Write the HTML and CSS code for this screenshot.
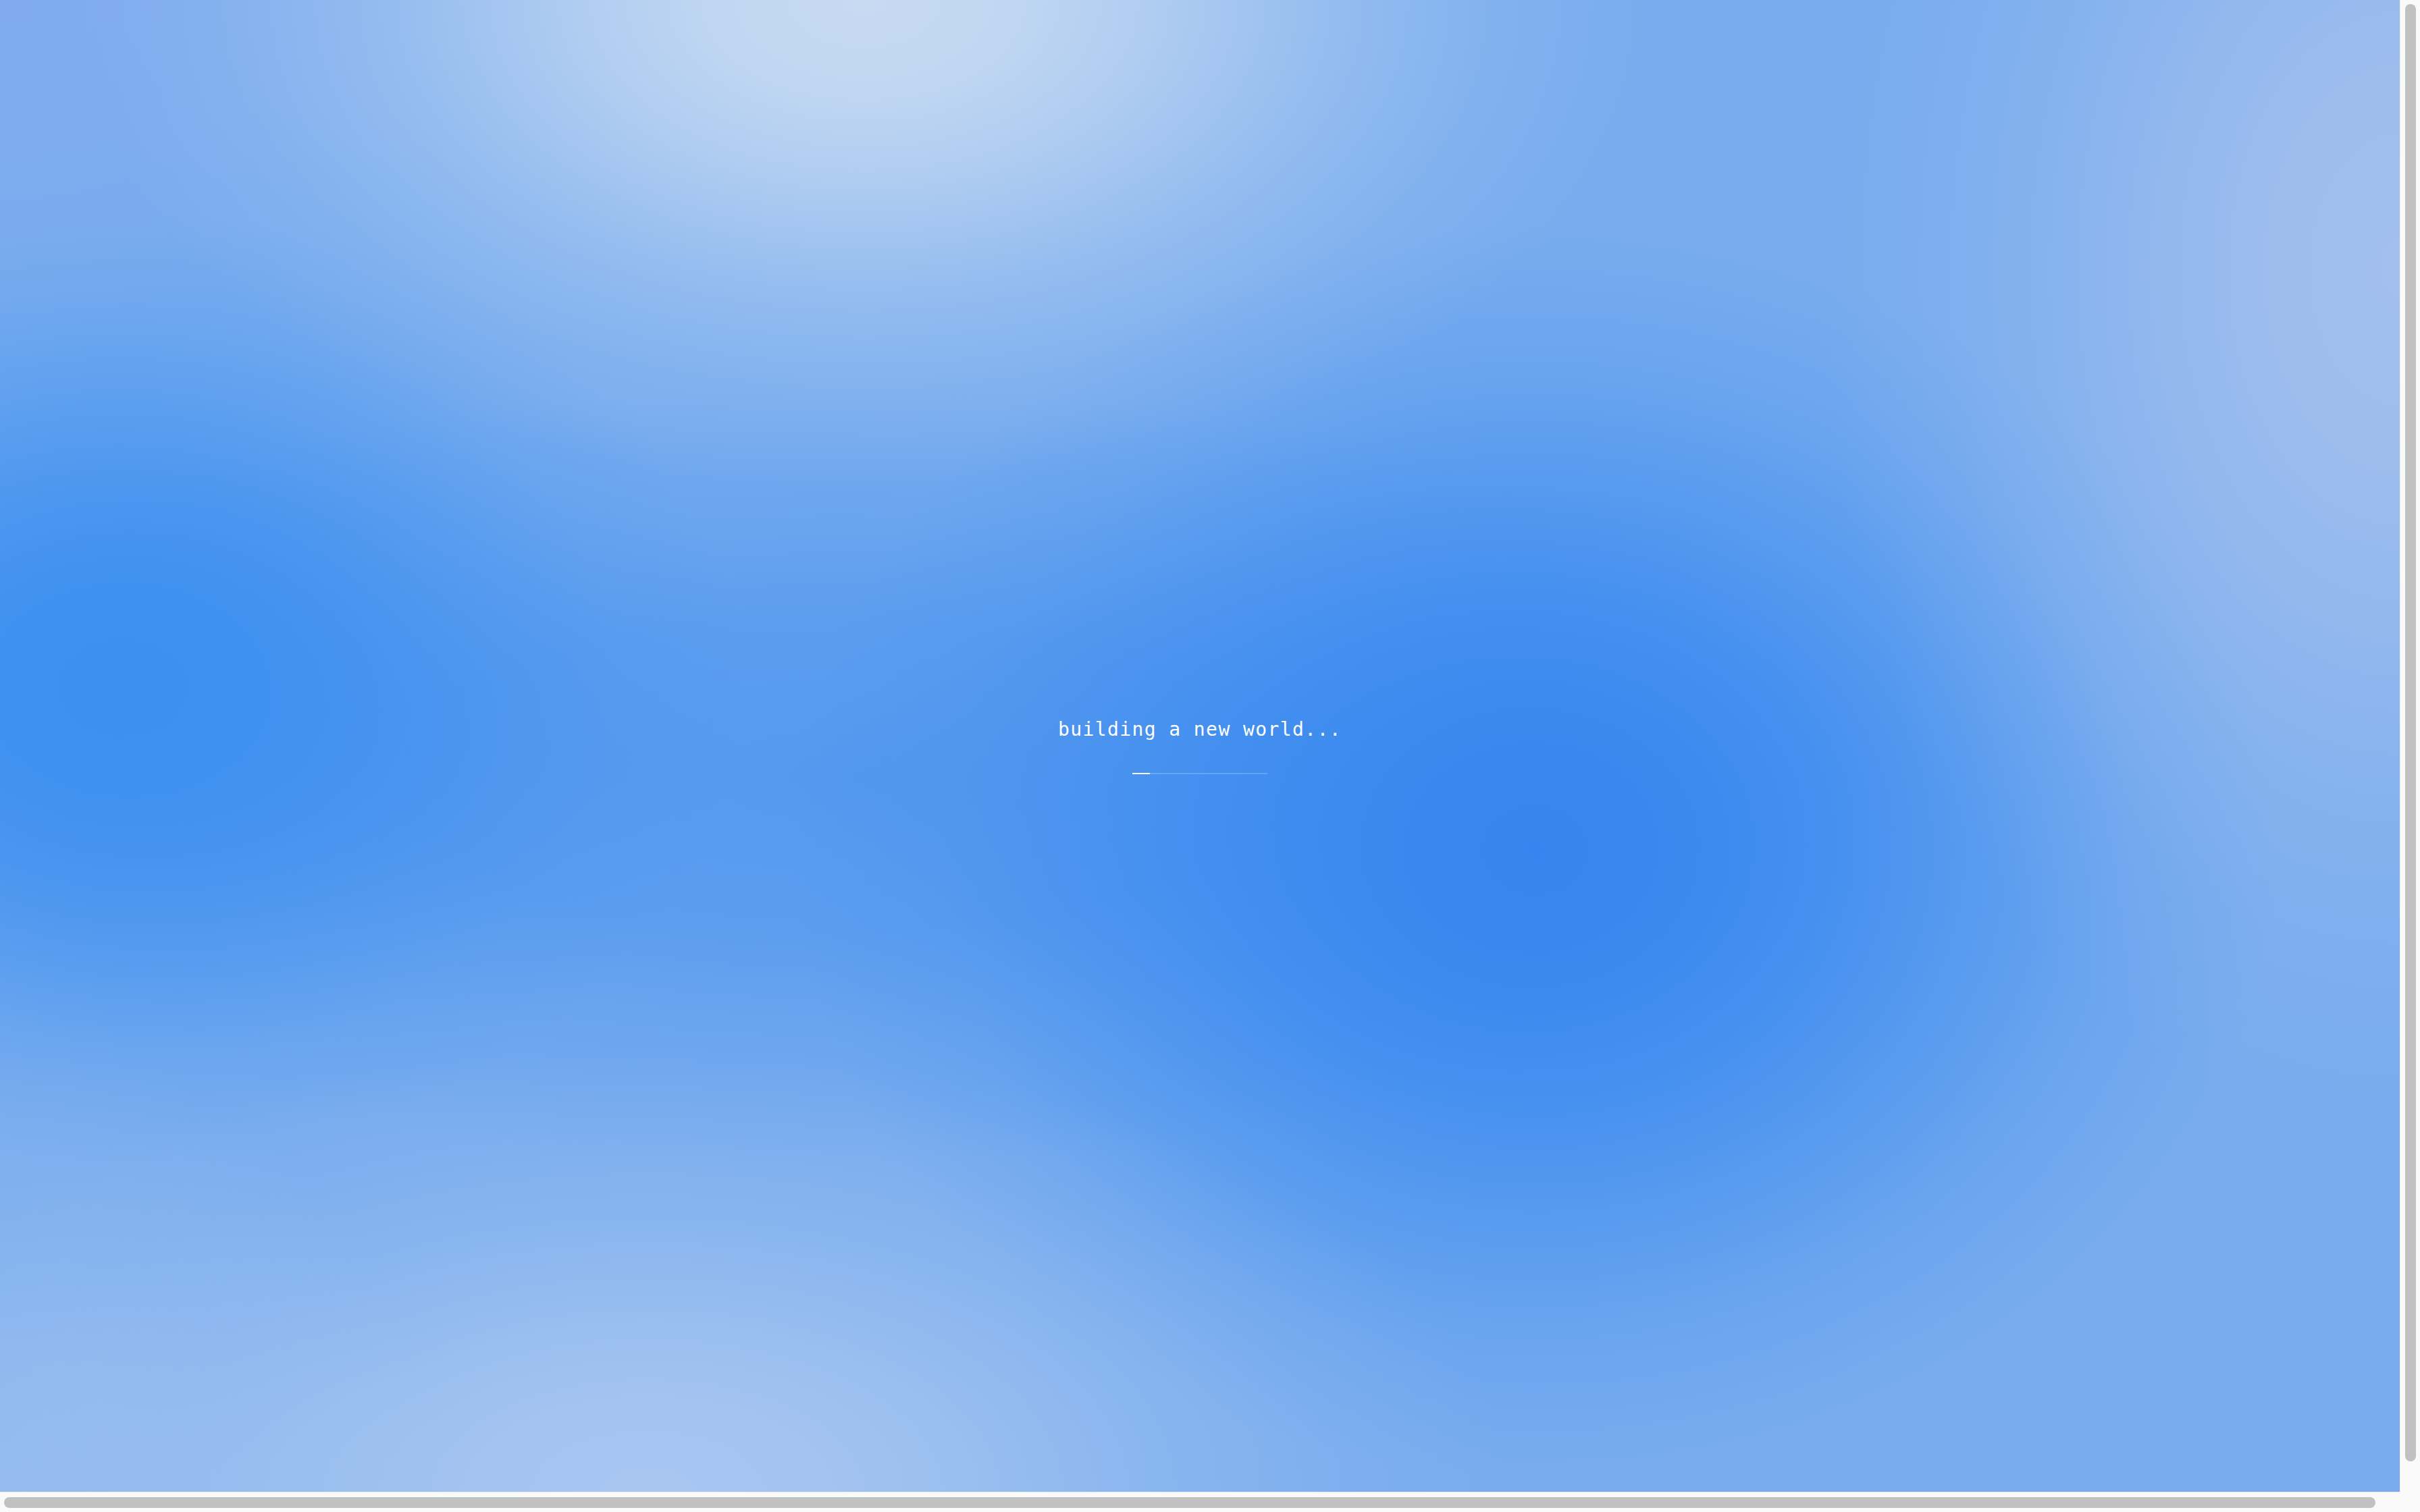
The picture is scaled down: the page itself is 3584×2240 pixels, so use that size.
FILE: index.html
```html
<!DOCTYPE html>
<html lang="en">
<head>
<meta charset="utf-8">
<title>building a new world</title>
<link rel="stylesheet" href="styles.css">
</head>
<body>
  <main class="loader">
    <p class="loader-text">building a new world...</p>
    <div class="progress"><div class="progress-fill" style="width: 13%"></div></div>
  </main>
  <div class="scrollbar scrollbar-v"><div class="thumb thumb-v"></div></div>
  <div class="scrollbar scrollbar-h"><div class="thumb thumb-h"></div></div>
  <div class="scrollbar-corner"></div>
</body>
</html>
```
FILE: styles.css
```css
html, body {
  height: 100%;
}
body {
  margin: 0;
  display: grid;
  grid-template-columns: 1fr 30px;
  grid-template-rows: 1fr 30px;
  background: #fafafa;
  overflow: hidden;
}
.loader {
  grid-column: 1;
  grid-row: 1;
  display: flex;
  flex-direction: column;
  align-items: center;
  justify-content: center;
  background-color: #78acee;
  background-image:
    radial-gradient(ellipse 33% 33% at 36% 0%, rgba(199,218,242,1) 0%, rgba(199,218,242,0.9) 20%, rgba(199,218,242,0.65) 40%, rgba(199,218,242,0.35) 60%, rgba(199,218,242,0.12) 80%, rgba(199,218,242,0) 100%),
    radial-gradient(ellipse 36% 30% at 27% 100%, rgba(168,198,240,1) 0%, rgba(168,198,240,0.9) 20%, rgba(168,198,240,0.65) 40%, rgba(168,198,240,0.35) 60%, rgba(168,198,240,0.12) 80%, rgba(168,198,240,0) 100%),
    radial-gradient(ellipse 18% 30% at 0% 100%, rgba(146,186,239,1) 0%, rgba(146,186,239,0.8) 30%, rgba(146,186,239,0.4) 60%, rgba(146,186,239,0) 100%),
    radial-gradient(ellipse 24% 58% at 100% 18%, rgba(162,191,238,1) 0%, rgba(162,191,238,0.9) 20%, rgba(162,191,238,0.65) 40%, rgba(162,191,238,0.35) 60%, rgba(162,191,238,0.12) 80%, rgba(162,191,238,0) 100%),
    radial-gradient(ellipse 20% 22% at 0% 0%, rgba(132,170,239,0.8) 0%, rgba(132,170,239,0.4) 50%, rgba(132,170,239,0) 100%),
    radial-gradient(ellipse 31% 42% at 64% 57%, rgba(56,132,238,1) 0%, rgba(57,136,239,0.97) 20%, rgba(58,138,240,0.8) 40%, rgba(58,138,240,0.5) 60%, rgba(58,138,240,0.18) 80%, rgba(58,138,240,0) 100%),
    radial-gradient(ellipse 26% 32% at 5% 46%, rgba(61,143,240,1) 0%, rgba(61,143,240,0.95) 20%, rgba(61,143,240,0.75) 40%, rgba(61,143,240,0.45) 60%, rgba(61,143,240,0.15) 80%, rgba(61,143,240,0) 100%),
    radial-gradient(ellipse 45% 26% at 35% 52%, rgba(78,149,239,0.85) 0%, rgba(78,149,239,0.65) 40%, rgba(78,149,239,0.28) 70%, rgba(78,149,239,0) 100%);
}
.loader-text {
  margin: 0;
  font-family: "DejaVu Sans Mono", "Liberation Mono", monospace;
  font-size: 28px;
  letter-spacing: 1.4px;
  color: #ffffff;
}
.progress {
  margin-top: 48px;
  width: 200px;
  height: 2px;
  background: rgba(255,255,255,0.2);
}
.progress-fill {
  height: 100%;
  background: #ffffff;
}
.scrollbar {
  background: #fafafa;
  box-sizing: border-box;
  display: flex;
}
.scrollbar-v {
  grid-column: 2;
  grid-row: 1;
  border-left: 1px solid #ececec;
  padding: 6px 6px 45px 7px;
}
.scrollbar-h {
  grid-column: 1;
  grid-row: 2;
  border-top: 1px solid #ececec;
  padding: 7px 36px 6px 6px;
}
.scrollbar-corner {
  grid-column: 2;
  grid-row: 2;
  background: #fafafa;
}
.thumb {
  flex: 1;
  background: #c1c1c1;
  border-radius: 8px;
}
```
